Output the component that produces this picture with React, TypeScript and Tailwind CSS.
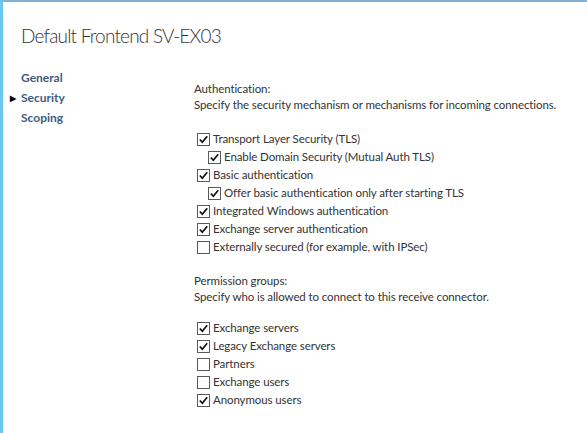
const font = { fontFamily: 'Lato, "Open Sans", sans-serif' }

function Check({ checked, label, indent }: { checked: boolean; label: string; indent?: boolean }) {
  return (
    <div className={`flex h-[18px] items-center ${indent ? "pl-[14px]" : "pl-[3px]"}`}>
      <span className="mr-[3px] flex h-[13px] w-[13px] shrink-0 items-center justify-center border border-[#5a5a5a] bg-white">
        {checked && (
          <svg width="11" height="11" viewBox="0 0 11 11">
            <path d="M1.8 5.5 L4.3 8.2 L9.2 2.2" fill="none" stroke="#111" strokeWidth="1.7" />
          </svg>
        )}
      </span>
      <span className="whitespace-nowrap text-[11.5px] tracking-[-0.1px] text-[#333]">{label}</span>
    </div>
  )
}

export default function App() {
  return (
    <div
      className="h-[433px] w-[587px] overflow-hidden border-t-2 border-l-[3px] border-t-[#7fb2da] border-l-[#6cc6ee] bg-white"
      style={font}
    >
      <h1 className="pl-[18px] pt-[21px] text-[19px] font-light leading-[26px] tracking-[-0.8px] text-[#333]">
        Default Frontend SV-EX03
      </h1>

      <div className="mt-[19px] flex">
        {/* Nav */}
        <div className="w-[191px] shrink-0 pl-[7px]">
          {["General", "Security", "Scoping"].map((n) => (
            <div key={n} className="flex h-[20px] items-center text-[12px] font-bold text-[#3d5d82]">
              <span className="w-[11px] text-[8px] text-black">{n === "Security" ? "▶" : ""}</span>
              {n}
            </div>
          ))}
        </div>

        {/* Content */}
        <div className="pt-[13px] text-[11.5px] tracking-[-0.1px] text-[#333]">
          <p className="leading-[16px]">Authentication:</p>
          <p className="whitespace-nowrap leading-[16px]">
            Specify the security mechanism or mechanisms for incoming connections.
          </p>
          <div className="mt-[17px]">
            <Check checked label="Transport Layer Security (TLS)" />
            <Check checked indent label="Enable Domain Security (Mutual Auth TLS)" />
            <Check checked label="Basic authentication" />
            <Check checked indent label="Offer basic authentication only after starting TLS" />
            <Check checked label="Integrated Windows authentication" />
            <Check checked label="Exchange server authentication" />
            <Check checked={false} label="Externally secured (for example, with IPSec)" />
          </div>

          <p className="mt-[17px] leading-[16px]">Permission groups:</p>
          <p className="whitespace-nowrap leading-[16px]">
            Specify who is allowed to connect to this receive connector.
          </p>
          <div className="mt-[14px]">
            <Check checked label="Exchange servers" />
            <Check checked label="Legacy Exchange servers" />
            <Check checked={false} label="Partners" />
            <Check checked={false} label="Exchange users" />
            <Check checked label="Anonymous users" />
          </div>
        </div>
      </div>
    </div>
  )
}
